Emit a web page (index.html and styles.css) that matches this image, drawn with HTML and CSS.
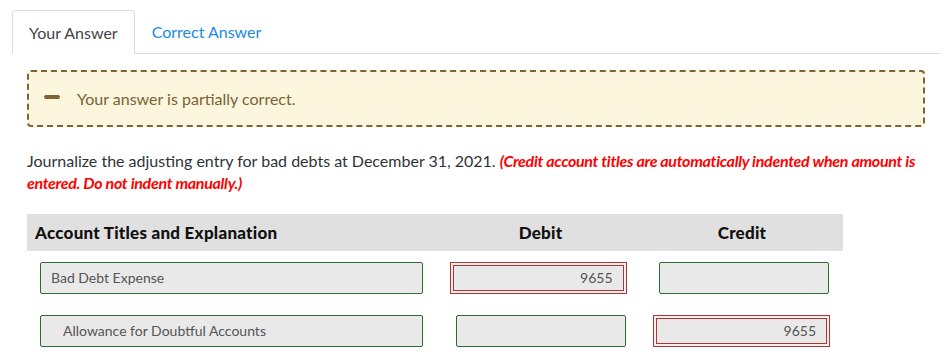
FILE: index.html
```html
<!DOCTYPE html>
<html lang="en">

<head>
  <meta charset="UTF-8">
  <title>Journal entry</title>
  <link rel="stylesheet" href="styles.css">
</head>

<body>
  <div class="tabs">
    <div class="tab active">Your Answer</div>
    <div class="tab">Correct Answer</div>
  </div>
  <div class="content">
    <div class="alert">
      <span class="minus"></span>
      <span class="alertText">Your answer is partially correct.</span>
    </div>
    <p class="question">Journalize the adjusting entry for bad debts at December 31, 2021. <em class="note">(Credit account titles are automatically indented when amount is entered. Do not indent manually.)</em></p>

    <div class="journal">
      <div class="row head">
        <div class="cell acct">Account Titles and Explanation</div>
        <div class="cell num">Debit</div>
        <div class="cell num">Credit</div>
      </div>
      <div class="row">
        <div class="cell acct"><input class="field" type="text" value="Bad Debt Expense"></div>
        <div class="cell num"><input class="field amount wrong" type="text" value="9655"></div>
        <div class="cell num"><input class="field amount" type="text" value=""></div>
      </div>
      <div class="row">
        <div class="cell acct"><input class="field indent" type="text" value="Allowance for Doubtful Accounts"></div>
        <div class="cell num"><input class="field amount" type="text" value=""></div>
        <div class="cell num"><input class="field amount wrong" type="text" value="9655"></div>
      </div>
    </div>
  </div>
</body>

</html>
```

FILE: styles.css
```css
* {
  margin: 0;
  padding: 0;
  box-sizing: border-box;
}

body {
  font-family: Lato, "Open Sans", sans-serif;
  color: #333;
  background-color: #fff;
  padding: 10px 12px 0 12px;
}

.tabs {
  display: flex;
  border-bottom: 1px solid #dcdcdc;
  height: 44px;
}

.tab {
  padding: 0 17px;
  height: 44px;
  line-height: 43px;
  font-size: 16px;
  color: #1a8ae0;
}

.tab.active {
  color: #444;
  background-color: #fff;
  border: 1px solid #dcdcdc;
  border-bottom: none;
  border-radius: 4px 4px 0 0;
  height: 44px;
  padding: 0 16px;
}

.content {
  padding: 0 15px;
}

.alert {
  margin-top: 16px;
  height: 57px;
  display: flex;
  align-items: center;
  background-color: #fcf6de;
  border: 2px dashed #7f6331;
  border-radius: 4px;
  padding-left: 15px;
}

.minus {
  display: inline-block;
  width: 16px;
  height: 4px;
  border-radius: 2px;
  background-color: #7f6331;
  margin-right: 17px;
  margin-top: -4px;
}

.alertText {
  font-size: 16px;
  color: #7b6233;
}

.question {
  margin-top: 23px;
  font-size: 16px;
  line-height: 22px;
  color: #2f3338;
}

.note {
  color: #f00;
  font-weight: 700;
  letter-spacing: -0.3px;
}

.journal {
  width: 816px;
  margin-top: 20px;
}

.row {
  display: flex;
  height: 53px;
  align-items: center;
}

.row.head {
  height: 37px;
  background-color: #e0e0e0;
  font-weight: 900;
  font-size: 17px;
  letter-spacing: 0.25px;
  color: #111;
}

.cell.acct {
  width: 413px;
  padding-left: 13px;
}

.row.head .cell.acct {
  padding-left: 8px;
}

.cell.num {
  width: 201px;
  display: flex;
  justify-content: center;
}

.row .cell:last-child {
  width: 202px;
  padding-left: 4px;
}

.row.head .cell:last-child {
  padding-left: 0;
}

.field {
  display: block;
  height: 32px;
  width: 383px;
  border: 1px solid #2f6d2f;
  border-radius: 2px;
  background-color: #e9e9e9;
  font-family: Lato, sans-serif;
  font-size: 14px;
  color: #555;
  padding: 0 10px;
  outline: none;
}

.field.indent {
  padding-left: 22px;
}

.field.amount {
  width: 170px;
  text-align: right;
  font-size: 14px;
}

.field.wrong {
  border: 1px solid #b03535;
  border-radius: 0;
  height: 26px;
  width: 171px;
  margin-right: 5px;
  box-shadow: 0 0 0 2px #f3eded, 0 0 0 3px #b03535;
}
```
